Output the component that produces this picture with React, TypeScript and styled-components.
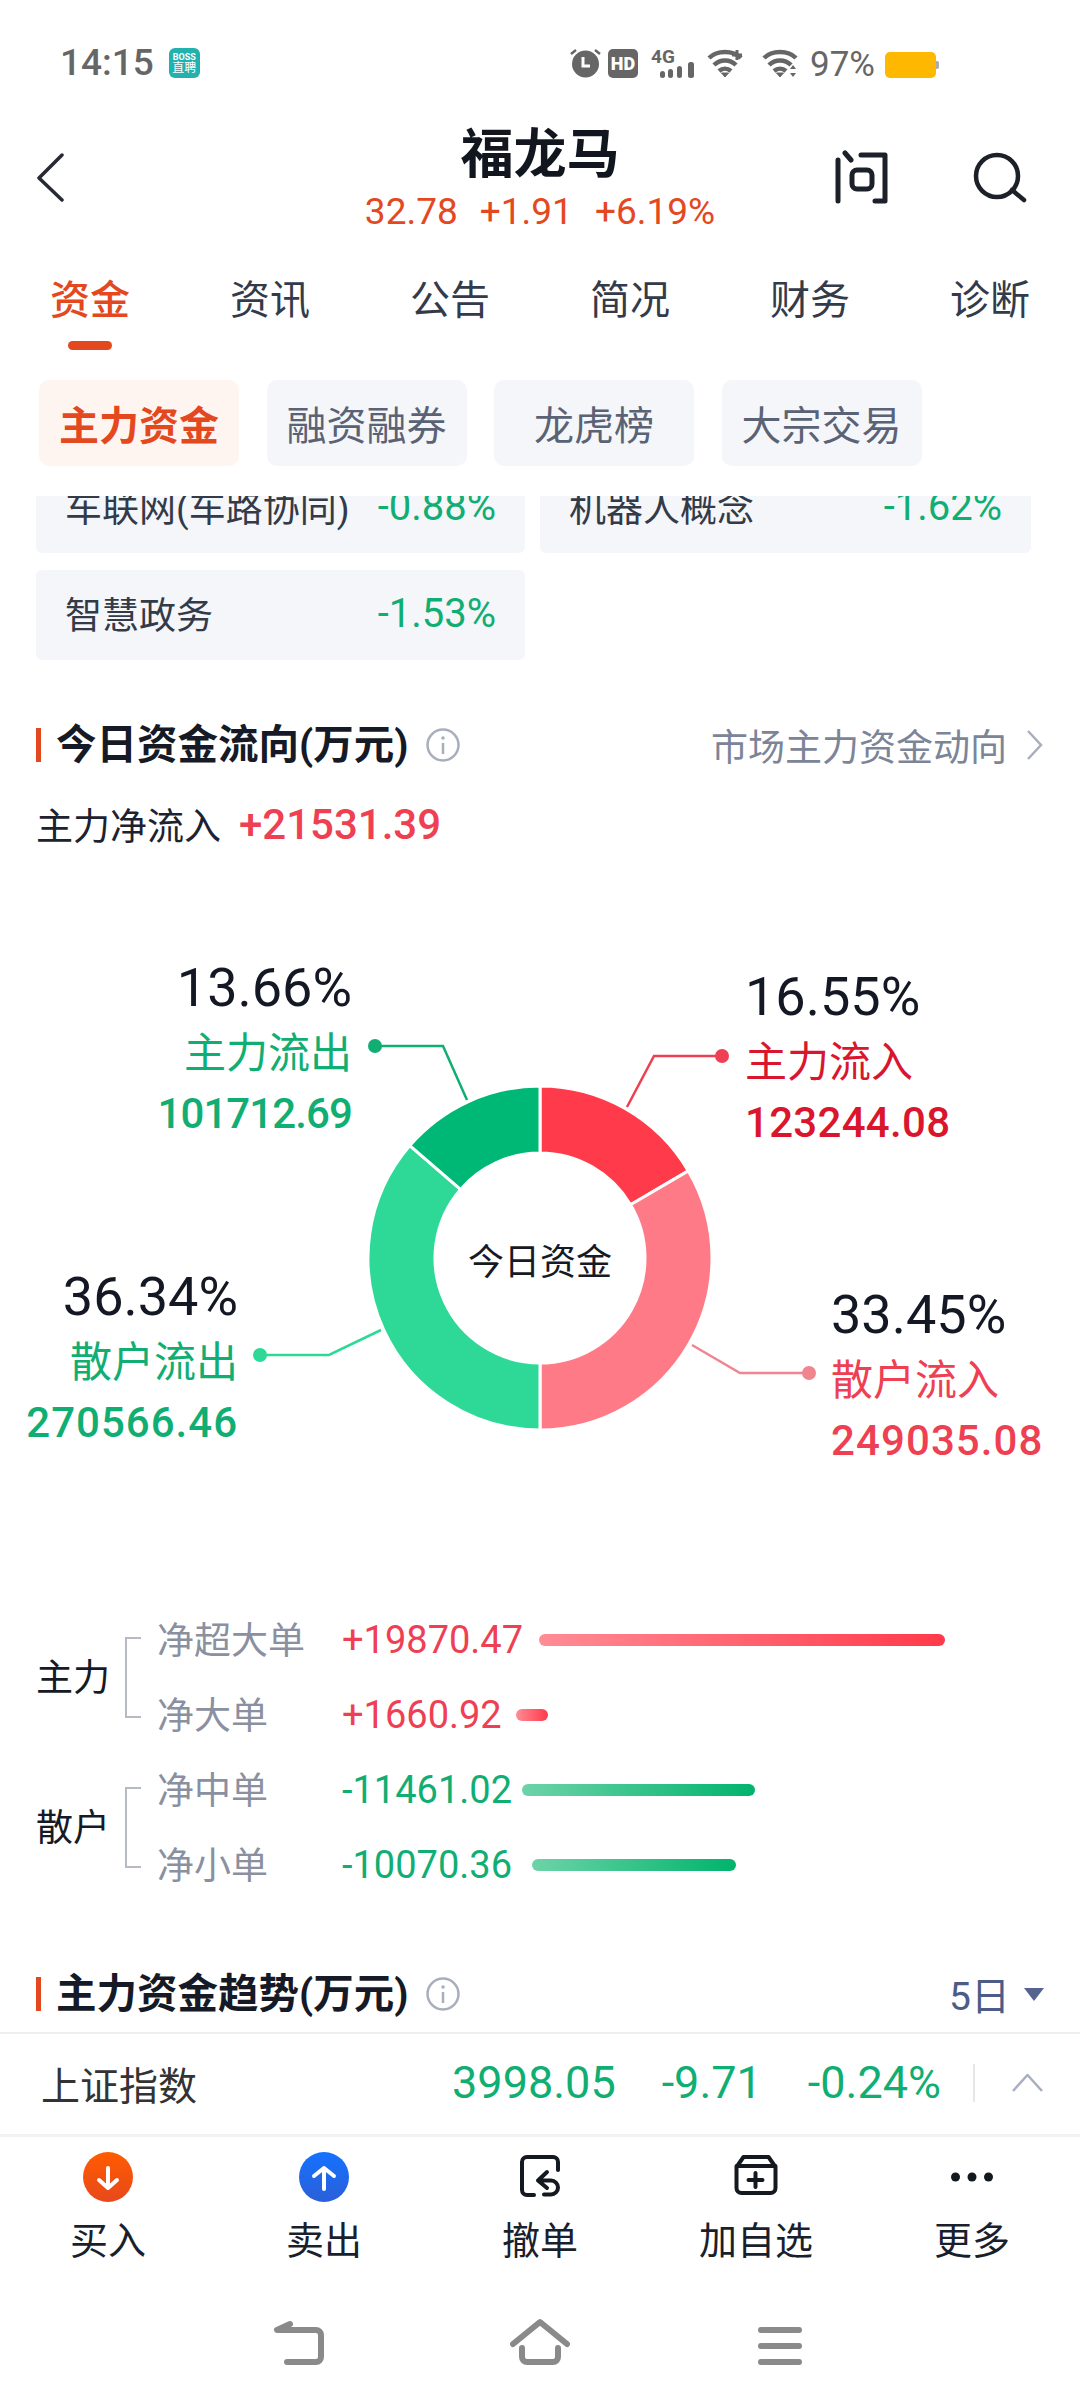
import styled, { createGlobalStyle } from "styled-components";

const GlobalStyle = createGlobalStyle`
  html, body { margin: 0; padding: 0; background: #fff; }
  body { font-family: Roboto, "Noto Sans CJK SC", sans-serif; }
`;

const orange = "#e4481f";
const red = "#ee3f53";
const green = "#10ae73";

const Page = styled.div`
  width: 1080px;
  height: 2408px;
  display: flex;
  flex-direction: column;
  overflow: hidden;
  background: #fff;
`;

const StatusBar = styled.div`
  height: 60px;
  padding: 48px 144px 0 60px;
  display: flex;
  align-items: flex-start;
  color: #666;
`;
const Clock = styled.span`
  font-size: 37px;
  font-weight: 500;
  line-height: 30px;
`;
const BossBadge = styled.span`
  margin-left: 15px;
  width: 31px;
  height: 30px;
  border-radius: 6px;
  background: #22b1ad;
  color: #fff;
  display: flex;
  flex-direction: column;
  align-items: center;
  justify-content: center;
  font-size: 12px;
  line-height: 13px;
  small { font-size: 9px; line-height: 10px; font-weight: 700; }
`;
const StatusRight = styled.div`
  margin-left: auto;
  display: flex;
  align-items: center;
  height: 30px;
`;
const StatusIcon = styled.svg<{ $ml: number }>`
  margin-left: ${(p) => p.$ml}px;
  display: block;
`;
const HdBadge = styled.span`
  margin-left: 7px;
  width: 30px;
  height: 29px;
  border-radius: 5px;
  background: #666;
  color: #fff;
  font-size: 18px;
  font-weight: 900;
  line-height: 29px;
  text-align: center;
`;
const BatteryText = styled.span`
  margin-left: 12px;
  font-size: 35px;
  line-height: 30px;
  padding-top: 3px;
`;
const Battery = styled.span`
  margin: 3px 0 0 10px;
  width: 51px;
  height: 26px;
  border-radius: 5px;
  background: #ffb800;
  position: relative;
  &::after {
    content: "";
    position: absolute;
    right: -3px;
    top: 9px;
    width: 3px;
    height: 8px;
    border-radius: 0 2px 2px 0;
    background: #aaa;
  }
`;

const Header = styled.header`
  height: 130px;
  display: grid;
  grid-template-columns: 1fr auto 1fr;
`;
const HeaderLeft = styled.div`
  padding: 45px 0 0 36px;
`;
const HeaderCenter = styled.div`
  padding-top: 19px;
  display: flex;
  flex-direction: column;
  align-items: center;
`;
const StockName = styled.h1`
  margin: 0;
  font-size: 53px;
  line-height: 56px;
  font-weight: 700;
  color: #12161f;
`;
const Quote = styled.div`
  margin-top: 13px;
  display: flex;
  gap: 22px;
  font-size: 37px;
  line-height: 32px;
  color: ${orange};
`;
const HeaderRight = styled.div`
  padding: 42px 50px 0 0;
  display: flex;
  justify-content: flex-end;
  gap: 82px;
  align-items: flex-start;
`;

const Tabs = styled.nav`
  padding: 40px 50px 0;
  display: flex;
  justify-content: space-between;
`;
const Tab = styled.div<{ $active?: boolean }>`
  width: 80px;
  display: flex;
  flex-direction: column;
  align-items: center;
  gap: 17px;
  font-size: 40px;
  line-height: 46px;
  white-space: nowrap;
  color: ${(p) => (p.$active ? orange : "#333b4b")};
  font-weight: ${(p) => (p.$active ? 500 : 400)};
  &::after {
    content: "";
    width: 44px;
    height: 9px;
    border-radius: 5px;
    background: ${(p) => (p.$active ? orange : "transparent")};
  }
`;

const SubTabs = styled.div`
  margin: 30px 0;
  padding-left: 39px;
  display: flex;
  gap: 27.5px;
`;
const SubTab = styled.div<{ $active?: boolean }>`
  width: 200px;
  height: 86px;
  border-radius: 10px;
  display: flex;
  align-items: center;
  justify-content: center;
  font-size: 40px;
  color: ${(p) => (p.$active ? orange : "#5a6275")};
  font-weight: ${(p) => (p.$active ? 700 : 400)};
  background: ${(p) => (p.$active ? "#fff5f0" : "#f4f6fa")};
`;

const Body = styled.main`
  flex: none;
  height: 1536px;
  overflow: hidden;
`;
const ConceptGrid = styled.div`
  margin-top: -33px;
  padding-left: 36px;
  display: grid;
  grid-template-columns: 489px 491px;
  gap: 17px 15px;
`;
const ConceptCard = styled.div`
  height: 90px;
  box-sizing: border-box;
  padding: 0 29px 4px 29px;
  border-radius: 6px;
  background: #f4f6fa;
  display: flex;
  align-items: center;
  justify-content: space-between;
  font-size: 37px;
  color: #333a48;
  b { font-weight: 400; font-size: 40px; color: ${green}; }
`;

const SectionHead = styled.div<{ $top: number }>`
  margin-top: ${(p) => p.$top}px;
  height: 40px;
  padding: 0 36px;
  display: flex;
  align-items: center;
`;
const SectionTitle = styled.h2`
  margin: 0 18px 0 0;
  padding-left: 15px;
  border-left: 5px solid ${orange};
  font-size: 40.5px;
  line-height: 34px;
  font-weight: 700;
  color: #151a26;
`;
const MoreLink = styled.span`
  margin-left: auto;
  display: flex;
  align-items: center;
  gap: 19px;
  font-size: 37px;
  color: #7c8598;
`;
const PeriodPicker = styled.span`
  margin-left: auto;
  padding-bottom: 3px;
  display: flex;
  align-items: center;
  gap: 14px;
  font-size: 39px;
  color: #4c5c86;
  svg { margin-top: 3px; }
`;

const NetRow = styled.div`
  margin-top: 34px;
  height: 50px;
  padding-left: 36px;
  display: flex;
  align-items: center;
  gap: 18px;
  font-size: 37px;
  color: #1c2230;
  b { font-size: 42px; font-weight: 500; color: ${red}; }
`;

const ChartCanvas = styled.section`
  margin-top: 51px;
  height: 600px;
  position: relative;
`;
const ChartDrawing = styled.svg`
  position: absolute;
  inset: 0;
`;
const ChartCenter = styled.div`
  position: absolute;
  left: 390px;
  top: 339px;
  width: 300px;
  text-align: center;
  font-size: 36px;
  line-height: 48px;
  color: #151a26;
`;
const Callout = styled.div<{
  $top: number;
  $left?: number;
  $right?: number;
  $name: string;
  $amount: string;
  $tracking: number;
}>`
  position: absolute;
  top: ${(p) => p.$top}px;
  ${(p) => (p.$left !== undefined ? `left: ${p.$left}px;` : `right: ${p.$right}px; text-align: right;`)}
  white-space: nowrap;
  strong { display: block; font-size: 54px; line-height: 66px; font-weight: 400; color: #131824; }
  span { display: block; margin: 2px 0 -2px; font-size: 42px; line-height: 62px; color: ${(p) => p.$name}; }
  em {
    display: block;
    font-style: normal;
    font-weight: 500;
    font-size: 42px;
    line-height: 62px;
    letter-spacing: ${(p) => p.$tracking}px;
    color: ${(p) => p.$amount};
  }
`;

const Breakdown = styled.section`
  margin-top: 102px;
`;
const Group = styled.div`
  padding-left: 36px;
  display: flex;
  align-items: center;
`;
const GroupName = styled.span`
  width: 89px;
  padding-bottom: 4px;
  font-size: 37px;
  color: #151a26;
`;
const Bracket = styled.span`
  width: 14px;
  height: 77px;
  margin-right: 16px;
  border: 2px solid #b5bac4;
  border-right: none;
`;
const Rows = styled.div`
  display: flex;
  flex-direction: column;
`;
const Row = styled.div`
  height: 75px;
  display: flex;
  align-items: center;
`;
const RowName = styled.span`
  width: 185px;
  padding-bottom: 3px;
  font-size: 37px;
  color: #8a90a0;
`;
const RowValue = styled.span<{ $up: boolean; $w: number }>`
  width: ${(p) => p.$w}px;
  white-space: nowrap;
  font-size: 38px;
  color: ${(p) => (p.$up ? red : green)};
`;
const Bar = styled.span<{ $up: boolean; $w: number }>`
  width: ${(p) => p.$w}px;
  height: 12px;
  border-radius: 6px;
  background: linear-gradient(
    90deg,
    ${(p) => (p.$up ? "#ff8c96, #ff3a4a" : "#6dd3a8, #00b36d")}
  );
`;

const IndexBar = styled.div`
  box-sizing: border-box;
  height: 105px;
  padding: 0 37px 3px 41px;
  border-top: 2px solid #eceef1;
  border-bottom: 3px solid #f0f2f4;
  display: flex;
  align-items: center;
`;
const IndexName = styled.span`
  font-size: 39px;
  color: #333;
`;
const IndexValues = styled.div`
  margin-left: auto;
  display: flex;
  gap: 46px;
  font-size: 45px;
  color: ${green};
`;
const IndexDivider = styled.span`
  margin: 0 37px 0 32px;
  width: 2px;
  height: 38px;
  background: #e4e6ea;
`;

const ActionBar = styled.div`
  padding-top: 15px;
  display: grid;
  grid-template-columns: repeat(5, 216px);
`;
const Action = styled.div`
  display: flex;
  flex-direction: column;
  align-items: center;
  font-size: 38px;
  line-height: 50px;
  color: #1a1f2e;
`;
const ActionIcon = styled.svg`
  display: block;
  margin-bottom: 14px;
`;

const NavBar = styled.div`
  margin-top: 52px;
  display: flex;
  justify-content: center;
`;
const NavSlot = styled.div`
  width: 240px;
  display: flex;
  justify-content: center;
`;

const sliceColors = ["#ff3a4a", "#ff7a87", "#2ed998", "#00b875"];
const slices = [16.55, 33.45, 36.34, 13.66];

// donut centre is at 540,358 in the canvas
const slicePath = (from: number, to: number) => {
  const pt = (pct: number, r: number) => {
    const a = (pct / 100) * Math.PI * 2;
    return `${(540 + r * Math.sin(a)).toFixed(2)} ${(358 - r * Math.cos(a)).toFixed(2)}`;
  };
  const big = to - from > 50 ? 1 : 0;
  return `M${pt(from, 172)} A172 172 0 ${big} 1 ${pt(to, 172)} L${pt(to, 105)} A105 105 0 ${big} 0 ${pt(from, 105)} Z`;
};

const leaders = [
  { color: "#ee3f53", points: "722,156 654,156 627,207" },
  { color: "#f0858f", points: "809,473 740,473 692,445" },
  { color: "#2ed998", points: "260,455 329,455 381,430" },
  { color: "#10ae73", points: "375,146 443,146 467,200" },
];

const callouts = [
  { top: 64, left: 745, pct: "16.55%", name: "主力流入", amount: "123244.08", nameColor: "#d9162e", amountColor: "#d9162e", tracking: 0.3 },
  { top: 382, left: 831, pct: "33.45%", name: "散户流入", amount: "249035.08", nameColor: red, amountColor: red, tracking: 1.1 },
  { top: 55, right: 728, pct: "13.66%", name: "主力流出", amount: "101712.69", nameColor: green, amountColor: green, tracking: -0.9 },
  { top: 364, right: 842, pct: "36.34%", name: "散户流出", amount: "270566.46", nameColor: green, amountColor: green, tracking: 1 },
];

// valueWidth keeps each bar starting where it does in the app
const groups = [
  {
    name: "主力",
    rows: [
      { label: "净超大单", value: "+19870.47", up: true, valueWidth: 197, width: 406 },
      { label: "净大单", value: "+1660.92", up: true, valueWidth: 174, width: 32 },
    ],
  },
  {
    name: "散户",
    rows: [
      { label: "净中单", value: "-11461.02", up: false, valueWidth: 180, width: 233 },
      { label: "净小单", value: "-10070.36", up: false, valueWidth: 190, width: 204 },
    ],
  },
];

const WifiArcs = () => (
  <g fill="none" stroke="#666" strokeWidth="4.5">
    <path d="M2 10 C10 2 26 2 34 10" />
    <path d="M7 17 C13 11 23 11 29 17" />
    <path d="M12 23 C15.5 20 20.5 20 24 23" />
    <path d="M14.5 25 L18 29 L21.5 25 Z" fill="#666" strokeWidth="1" />
  </g>
);

const InfoIcon = () => (
  <svg width="34" height="34" viewBox="0 0 34 34">
    <circle cx="17" cy="17" r="15.5" fill="none" stroke="#a8aebb" strokeWidth="2.5" />
    <circle cx="17" cy="10" r="1.8" fill="#a8aebb" />
    <path d="M17 15 V26" stroke="#a8aebb" strokeWidth="2.5" />
  </svg>
);

export default function App() {
  let acc = 0;
  return (
    <Page>
      <GlobalStyle />
      <StatusBar>
        <Clock>14:15</Clock>
        <BossBadge>
          <small>BOSS</small>直聘
        </BossBadge>
        <StatusRight>
          <StatusIcon $ml={0} width="31" height="30" viewBox="0 0 31 30">
            <circle cx="15.5" cy="16" r="13.5" fill="#666" />
            <path d="M13 9 V18 H20" fill="none" stroke="#fff" strokeWidth="3" />
            <path d="M1 6 L6 2 M30 6 L25 2" stroke="#666" strokeWidth="2.5" />
          </StatusIcon>
          <HdBadge>HD</HdBadge>
          <StatusIcon $ml={13} width="43" height="30" viewBox="0 0 43 30">
            <text x="0" y="15" fontSize="19" fontWeight="700" fill="#666" fontFamily="Roboto, sans-serif">
              4G
            </text>
            <rect x="9" y="23" width="5" height="7" rx="2.5" fill="#666" />
            <rect x="17" y="21" width="5" height="9" rx="2.5" fill="#666" />
            <rect x="26" y="18" width="5" height="12" rx="2.5" fill="#666" />
            <rect x="37" y="14" width="6" height="16" rx="2.5" fill="#666" />
          </StatusIcon>
          <StatusIcon $ml={13} width="37" height="30" viewBox="0 0 37 30">
            <WifiArcs />
            <path d="M30 2 V12 M25 7 H35" stroke="#666" strokeWidth="3" />
          </StatusIcon>
          <StatusIcon $ml={18} width="36" height="30" viewBox="0 0 36 30">
            <WifiArcs />
            <path d="M31 17 L34 21 H28 Z M31 29 L34 25 H28 Z" fill="#666" />
          </StatusIcon>
          <BatteryText>97%</BatteryText>
          <Battery />
        </StatusRight>
      </StatusBar>

      <Header>
        <HeaderLeft>
          <svg width="30" height="50" viewBox="0 0 30 50">
            <path d="M26 2 L3 25 L26 47" fill="none" stroke="#262a33" strokeWidth="3.5" strokeLinecap="round" strokeLinejoin="round" />
          </svg>
        </HeaderLeft>
        <HeaderCenter>
          <StockName>福龙马</StockName>
          <Quote>
            <span>32.78</span>
            <span>+1.91</span>
            <span>+6.19%</span>
          </Quote>
        </HeaderCenter>
        <HeaderRight>
          <svg width="55" height="54" viewBox="835 150 55 54" fill="none" stroke="#1c2028" strokeWidth="5" strokeLinecap="round" strokeLinejoin="round">
            <path d="M838 160 V201 M845 153 L851 160 M861 155 H885 V201 H875" />
            <rect x="852" y="170" width="20" height="19" rx="5" />
          </svg>
          <svg width="58" height="54" viewBox="972 150 58 54" fill="none" stroke="#1c2028" strokeWidth="4.5" strokeLinecap="round">
            <circle cx="997" cy="176" r="21" />
            <path d="M1012 190 L1024 200" />
          </svg>
        </HeaderRight>
      </Header>

      <Tabs>
        <Tab $active>资金</Tab>
        <Tab>资讯</Tab>
        <Tab>公告</Tab>
        <Tab>简况</Tab>
        <Tab>财务</Tab>
        <Tab>诊断</Tab>
      </Tabs>

      <SubTabs>
        <SubTab $active>主力资金</SubTab>
        <SubTab>融资融券</SubTab>
        <SubTab>龙虎榜</SubTab>
        <SubTab>大宗交易</SubTab>
      </SubTabs>

      <Body>
        <ConceptGrid>
          <ConceptCard>
            <span>车联网(车路协同)</span>
            <b>-0.88%</b>
          </ConceptCard>
          <ConceptCard>
            <span>机器人概念</span>
            <b>-1.62%</b>
          </ConceptCard>
          <ConceptCard>
            <span>智慧政务</span>
            <b>-1.53%</b>
          </ConceptCard>
        </ConceptGrid>

        <SectionHead $top={65}>
          <SectionTitle>今日资金流向(万元)</SectionTitle>
          <InfoIcon />
          <MoreLink>
            市场主力资金动向
            <svg width="18" height="30" viewBox="0 0 18 30">
              <path d="M2 1 L15 15 L2 29" fill="none" stroke="#a8aebb" strokeWidth="2.5" />
            </svg>
          </MoreLink>
        </SectionHead>

        <NetRow>
          主力净流入
          <b>+21531.39</b>
        </NetRow>

        <ChartCanvas>
          <ChartDrawing width="1080" height="600" viewBox="0 0 1080 600">
            {slices.map((pct, i) => {
              const from = acc;
              acc += pct;
              return <path key={i} d={slicePath(from, acc)} fill={sliceColors[i]} stroke="#fff" strokeWidth="3" />;
            })}
            {leaders.map((l) => {
              const [dot] = l.points.split(" ");
              const [cx, cy] = dot.split(",");
              return (
                <g key={l.points}>
                  <polyline points={l.points} fill="none" stroke={l.color} strokeWidth="2.5" />
                  <circle cx={cx} cy={cy} r="7" fill={l.color} />
                </g>
              );
            })}
          </ChartDrawing>
          <ChartCenter>今日资金</ChartCenter>
          {callouts.map((c) => (
            <Callout
              key={c.pct}
              $top={c.top}
              $left={c.left}
              $right={c.right}
              $name={c.nameColor}
              $amount={c.amountColor}
              $tracking={c.tracking}
            >
              <strong>{c.pct}</strong>
              <span>{c.name}</span>
              <em>{c.amount}</em>
            </Callout>
          ))}
        </ChartCanvas>

        <Breakdown>
          {groups.map((g) => (
            <Group key={g.name}>
              <GroupName>{g.name}</GroupName>
              <Bracket />
              <Rows>
                {g.rows.map((r) => (
                  <Row key={r.label}>
                    <RowName>{r.label}</RowName>
                    <RowValue $up={r.up} $w={r.valueWidth}>{r.value}</RowValue>
                    <Bar $up={r.up} $w={r.width} />
                  </Row>
                ))}
              </Rows>
            </Group>
          ))}
        </Breakdown>

        <SectionHead $top={72}>
          <SectionTitle>主力资金趋势(万元)</SectionTitle>
          <InfoIcon />
          <PeriodPicker>
            5日
            <svg width="20" height="13" viewBox="0 0 20 13">
              <path d="M0 0 H20 L10 13 Z" fill="#55648f" />
            </svg>
          </PeriodPicker>
        </SectionHead>
      </Body>

      <IndexBar>
        <IndexName>上证指数</IndexName>
        <IndexValues>
          <span>3998.05</span>
          <span>-9.71</span>
          <span>-0.24%</span>
        </IndexValues>
        <IndexDivider />
        <svg width="31" height="18" viewBox="0 0 31 18">
          <path d="M1 17 L15.5 1 L30 17" fill="none" stroke="#a9afc0" strokeWidth="2.5" />
        </svg>
      </IndexBar>

      <ActionBar>
        <Action>
          <ActionIcon width="50" height="50" viewBox="-25 -25 50 50">
            <defs>
              <linearGradient id="buyFill" x1="0" y1="0" x2="0" y2="1">
                <stop offset="0" stopColor="#ff5c00" />
                <stop offset="1" stopColor="#e8481c" />
              </linearGradient>
            </defs>
            <circle r="25" fill="url(#buyFill)" />
            <path d="M0 -9 V11 M-9 3 L0 11 L9 3" fill="none" stroke="#fff" strokeWidth="4" strokeLinecap="round" strokeLinejoin="round" />
          </ActionIcon>
          买入
        </Action>
        <Action>
          <ActionIcon width="50" height="50" viewBox="-25 -25 50 50">
            <defs>
              <linearGradient id="sellFill" x1="0" y1="0" x2="0" y2="1">
                <stop offset="0" stopColor="#1472ff" />
                <stop offset="1" stopColor="#2b5fd8" />
              </linearGradient>
            </defs>
            <circle r="25" fill="url(#sellFill)" />
            <path d="M0 12 V-9 M-10 -1 L0 -9 L10 -1" fill="none" stroke="#fff" strokeWidth="4" strokeLinecap="round" strokeLinejoin="round" />
          </ActionIcon>
          卖出
        </Action>
        <Action>
          <ActionIcon width="50" height="50" viewBox="-5 -3 50 50" fill="none" stroke="#14181f" strokeWidth="4" strokeLinecap="round" strokeLinejoin="round">
            <path d="M14 40 H7 a5 5 0 0 1 -5 -5 V7 a5 5 0 0 1 5 -5 H33 a5 5 0 0 1 5 5 V15" />
            <path d="M27 17 L18 25.5 L27 33 M18 25.5 H31 a7 7 0 0 1 0 14 H24" />
          </ActionIcon>
          撤单
        </Action>
        <Action>
          <ActionIcon width="50" height="50" viewBox="-3.5 -3 50 50" fill="none" stroke="#14181f" strokeWidth="4" strokeLinecap="round" strokeLinejoin="round">
            <path d="M9 2 H34 L41 12 V33 a5 5 0 0 1 -5 5 H7 a5 5 0 0 1 -5 -5 V12 Z M2 11 H41 M21 18 V32 M14 25 H28" />
          </ActionIcon>
          加自选
        </Action>
        <Action>
          <ActionIcon width="50" height="50" viewBox="-25 -25 50 50" fill="#14181f">
            <circle cx="-16.5" r="4.5" />
            <circle cx="0" r="4.5" />
            <circle cx="16.5" r="4.5" />
          </ActionIcon>
          更多
        </Action>
      </ActionBar>

      <NavBar>
        <NavSlot>
          <svg width="60" height="50" viewBox="270 2319 60 50" fill="none" stroke="#8a8a8a" strokeWidth="6" strokeLinecap="round" strokeLinejoin="round">
            <path d="M290 2325 L277 2331 H316 a5 5 0 0 1 5 5 V2358 a5 5 0 0 1 -5 5 H287" />
          </svg>
        </NavSlot>
        <NavSlot>
          <svg width="60" height="50" viewBox="510 2319 60 50" fill="none" stroke="#8a8a8a" strokeWidth="6" strokeLinecap="round" strokeLinejoin="round">
            <path d="M513 2345 L540 2323 L567 2345 M522 2349 V2358 a5 5 0 0 0 5 5 H553 a5 5 0 0 0 5 -5 V2349" />
          </svg>
        </NavSlot>
        <NavSlot>
          <svg width="60" height="50" viewBox="750 2319 60 50" fill="none" stroke="#8a8a8a" strokeWidth="6" strokeLinecap="round">
            <path d="M761 2331 H799 M761 2347 H799 M761 2363 H799" />
          </svg>
        </NavSlot>
      </NavBar>
    </Page>
  );
}
